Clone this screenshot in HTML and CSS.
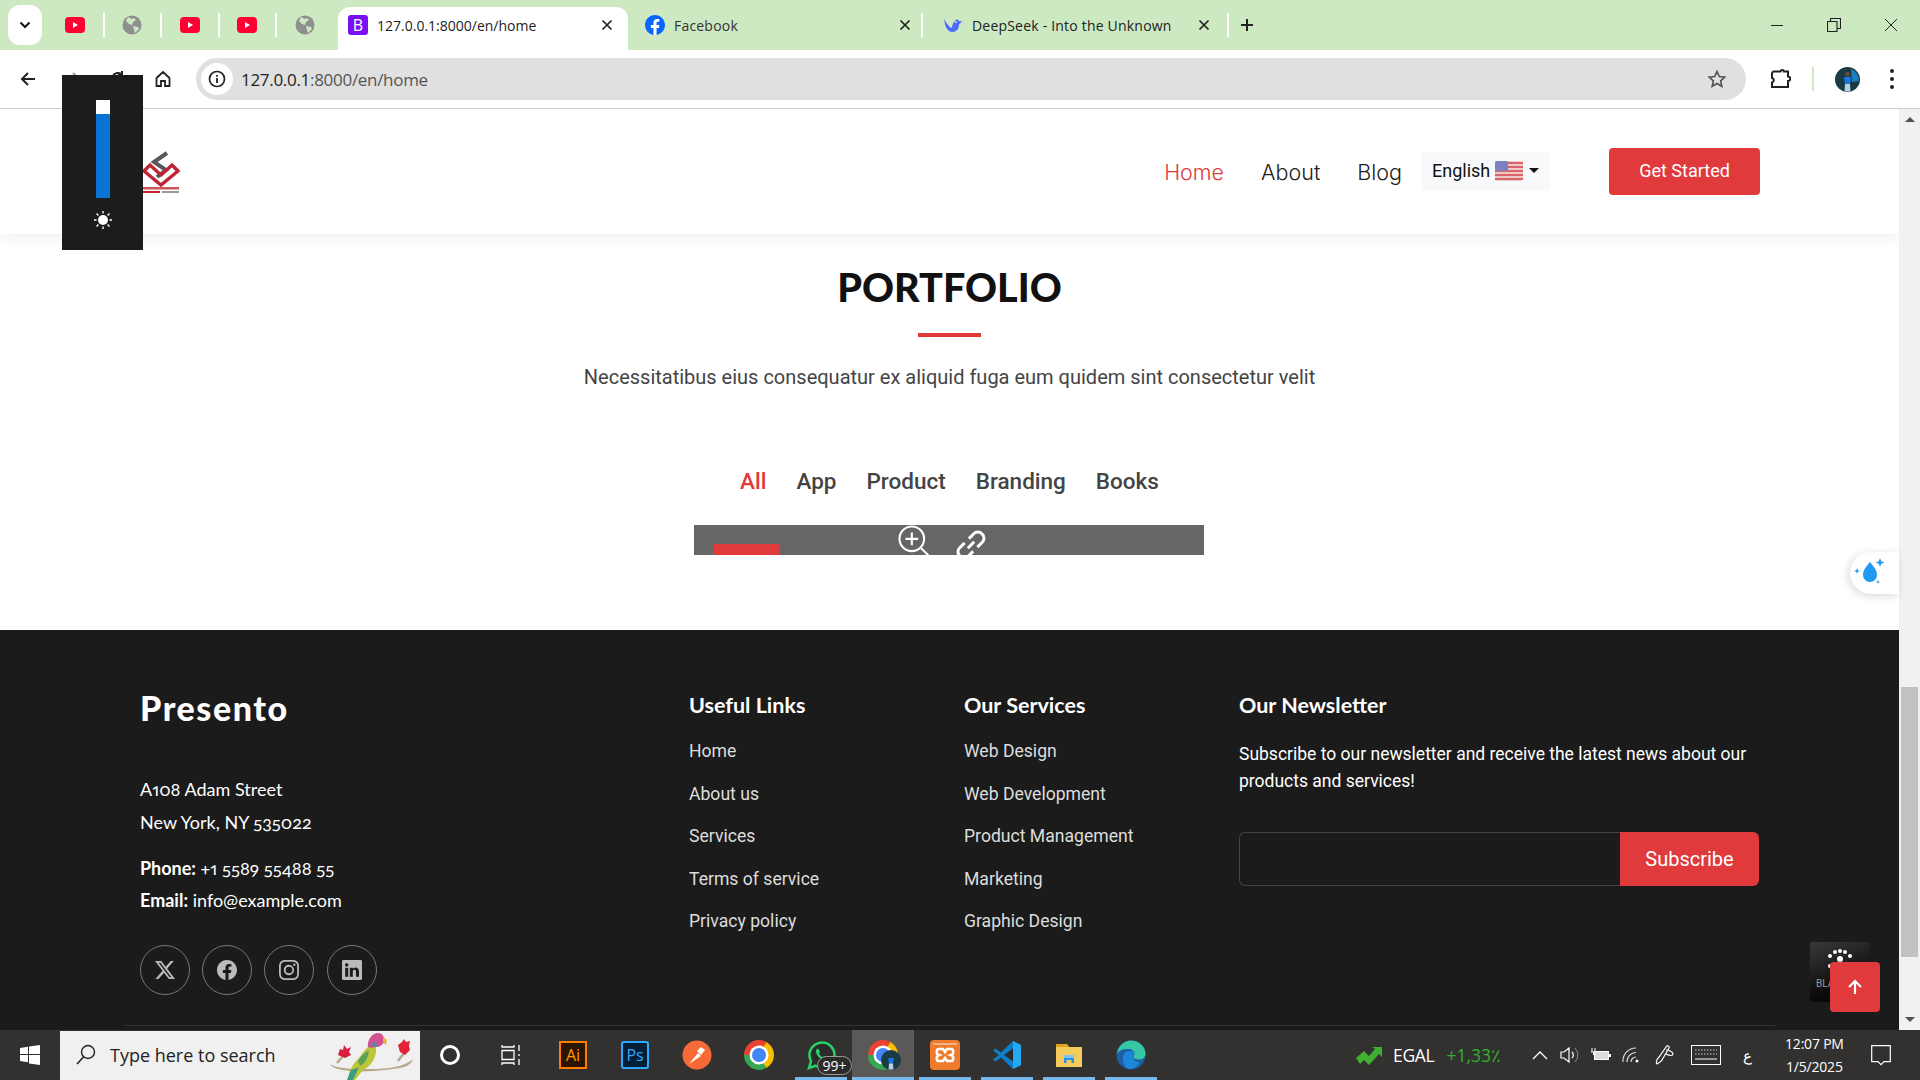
FILE: index.html
```html
<!DOCTYPE html>
<html lang="en">
<head>
<meta charset="utf-8">
<title>Presento</title>
<link rel="stylesheet" href="styles.css">
</head>
<body>
<svg class="defs" width="0" height="0" aria-hidden="true">
  <symbol id="yt" viewBox="0 0 20 16"><rect width="20" height="16" rx="4" fill="#ff0033"/><path d="M8 5l5 3-5 3z" fill="#fff"/></symbol>
  <symbol id="globe" viewBox="0 0 20 20"><circle cx="10" cy="10" r="9.500" fill="#8f8f8f"/><path d="M6 2l4 2 2-1 2 2-3 2-1 3-3-1-3-3zM11 11l5 1 1 2-4 4-1-3z" fill="#cde9c1"/></symbol>
  <symbol id="x" viewBox="0 0 12 12"><path d="M1.500 1.500l9 9M10.500 1.500l-9 9" fill="none" stroke="#222" stroke-width="1.700"/></symbol>
</svg>

<div class="tabstrip">
  <button class="tab-search"><svg width="12" height="8" viewBox="0 0 12 8"><path d="M1.500 1.500L6 6l4.500-4.500" fill="none" stroke="#111" stroke-width="2"/></svg></button>
  <div class="mini"><svg width="20" height="16"><use href="#yt"/></svg></div><i class="sep"></i>
  <div class="mini"><svg width="20" height="20"><use href="#globe"/></svg></div><i class="sep"></i>
  <div class="mini"><svg width="20" height="16"><use href="#yt"/></svg></div><i class="sep"></i>
  <div class="mini"><svg width="20" height="16"><use href="#yt"/></svg></div><i class="sep"></i>
  <div class="mini"><svg width="20" height="20"><use href="#globe"/></svg></div>
  <div class="tab active">
    <span class="bs-icon">B</span>
    <span class="tab-title">127.0.0.1:8000/en/home</span>
    <svg class="tab-close" width="12" height="12"><use href="#x"/></svg>
  </div>
  <div class="tab fb">
    <svg width="20" height="20" viewBox="0 0 16 16"><circle cx="8" cy="8" r="8" fill="#fff"/><path fill="#0866ff" d="M16 8.049c0-4.446-3.582-8.050-8-8.050C3.580 0-.002 3.603-.002 8.050c0 4.017 2.926 7.347 6.750 7.951v-5.625h-2.030V8.050H6.750V6.275c0-2.017 1.195-3.131 3.022-3.131.876 0 1.791.157 1.791.157v1.980h-1.009c-.993 0-1.303.621-1.303 1.258v1.510h2.218l-.354 2.326H9.250V16c3.824-.604 6.750-3.934 6.750-7.951"/></svg>
    <span class="tab-title">Facebook</span>
    <svg class="tab-close" width="12" height="12"><use href="#x"/></svg>
  </div>
  <i class="sep"></i>
  <div class="tab ds">
    <svg width="20" height="16" viewBox="0 0 20 16"><path fill="#4d6bfe" d="M1 2c1 4 1 9 5 12 3 2 7 1 9-2 1-2 1-4 1-5 1 0 2-1 3-3-1 0-2 1-3 0-1-2-3-2-4 0-2 2-3 4-3 7-3-1-5-4-8-9z"/><circle cx="13" cy="5" r="1" fill="#cde9c1"/></svg>
    <span class="tab-title">DeepSeek - Into the Unknown</span>
    <svg class="tab-close" width="12" height="12"><use href="#x"/></svg>
  </div>
  <i class="sep"></i>
  <svg class="plus" width="14" height="14" viewBox="0 0 14 14"><path d="M7 1v12M1 7h12" stroke="#222" stroke-width="2"/></svg>
  <div class="win-controls">
    <svg width="14" height="14" viewBox="0 0 14 14"><path d="M1 7.500h12" stroke="#222" stroke-width="1"/></svg>
    <svg width="14" height="14" viewBox="0 0 14 14"><path d="M.5 3.500h9.500v10H.5zM3.500 3.500V.5h10v10h-3.500" fill="none" stroke="#222" stroke-width="1.100"/></svg>
    <svg width="14" height="14" viewBox="0 0 14 14"><path d="M1 1l12 12M13 1L1 13" stroke="#222" stroke-width="1"/></svg>
  </div>
</div>

<div class="toolbar">
  <div class="tb-btn"><svg width="18" height="18" viewBox="0 0 18 18"><path d="M16 9H3M9 3L3 9l6 6" fill="none" stroke="#222" stroke-width="2"/></svg></div>
  <div class="tb-btn"><svg width="18" height="18" viewBox="0 0 18 18"><path d="M2 9h13M9 3l6 6-6 6" fill="none" stroke="#999" stroke-width="2"/></svg></div>
  <div class="tb-btn"><svg width="18" height="18" viewBox="0 0 18 18"><path d="M15 9a6 6 0 1 1-2-4.500M13 1v4h-4" fill="none" stroke="#222" stroke-width="2"/></svg></div>
  <div class="tb-btn"><svg width="18" height="18" viewBox="0 0 18 18"><path d="M2.500 8L9 2l6.500 6v8H11v-5H7v5H2.500z" fill="none" stroke="#222" stroke-width="1.800"/></svg></div>
  <div class="omni">
    <span class="info"><svg width="18" height="18" viewBox="0 0 18 18"><circle cx="9" cy="9" r="7.500" fill="none" stroke="#222" stroke-width="1.700"/><path d="M9 8v5M9 5v1.800" stroke="#222" stroke-width="1.800"/></svg></span>
    <span class="url"><b>127.0.0.1</b>:8000/en/home</span>
    <svg class="star" width="20" height="20" viewBox="0 0 20 20"><path d="M10 2.500l2.300 5 5.400.6-4 3.700 1.100 5.400-4.800-2.800-4.800 2.800 1.100-5.400-4-3.700 5.400-.6z" fill="none" stroke="#555" stroke-width="1.700"/></svg>
  </div>
  <div class="tb-btn ext"><svg width="22" height="22" viewBox="0 0 22 22"><path d="M8 3.500h3.500a1.800 1.800 0 0 1 3.500 0h4v5a1.800 1.800 0 0 1 0 4.500v6H3v-4.500a2.300 2.300 0 0 0 0-4.500V5.500a2 2 0 0 1 2-2z" fill="none" stroke="#222" stroke-width="2"/></svg></div>
  <i class="tb-sep"></i>
  <div class="avatar"><svg width="25" height="25" viewBox="0 0 25 25"><circle cx="12.500" cy="12.500" r="12.500" fill="#1a3a44"/><path d="M16 2a12 12 0 0 1 8 12l-7 1z" fill="#1c7fc0"/><path d="M9 10h7l-1 7h-5z" fill="#1976e8"/><circle cx="12.500" cy="7" r="2.200" fill="#6b4a3a"/><path d="M10 17h5l.5 7.500h-6z" fill="#b7d0e8"/></svg></div>
  <div class="dots"><i></i><i></i><i></i></div>
</div>

<div class="page">
  <div class="viewport">
    <header class="site-header">
      <div class="logo">
        <svg width="38" height="43" viewBox="0 0 38 43">
          <path d="M25 2L12 11l12 8-9 7" fill="none" stroke="#58585a" stroke-width="4"/>
          <path d="M2 20l6-6 11 10 11-10 6 6-17 14z" fill="none" stroke="#be2433" stroke-width="3.400"/>
          <rect x="1" y="36" width="36" height="2.500" fill="#c8565c"/>
          <rect x="1" y="40" width="17" height="2" fill="#c0262f"/>
          <rect x="20" y="40" width="17" height="2" fill="#999"/>
        </svg>
      </div>
      <nav class="main-nav">
        <a class="nav-link current">Home</a>
        <a class="nav-link">About</a>
        <a class="nav-link">Blog</a>
      </nav>
      <div class="lang">
        <span>English</span>
        <svg class="flag" width="28" height="20" viewBox="0 0 28 20">
          <rect width="28" height="20" rx="3" fill="#efc8c8"/>
          <path d="M0 2h28M0 6h28M0 10h28M0 14h28M0 18h28" stroke="#d9656b" stroke-width="2"/>
          <rect width="13" height="10" rx="2" fill="#7b82c4"/>
        </svg>
        <i class="caret"></i>
      </div>
      <a class="btn-start">Get Started</a>
    </header>

    <section class="portfolio">
      <h2 class="section-title">PORTFOLIO</h2>
      <div class="title-rule"></div>
      <p class="section-sub">Necessitatibus eius consequatur ex aliquid fuga eum quidem sint consectetur velit</p>
      <ul class="filters">
        <li class="current">All</li>
        <li>App</li>
        <li>Product</li>
        <li>Branding</li>
        <li>Books</li>
      </ul>
      <div class="item-overlay">
        <i class="item-tag"></i>
        <svg class="ov-zoom" width="34" height="34" viewBox="0 0 16 16"><circle cx="6.500" cy="6.500" r="5.800" fill="none" stroke="#fff" stroke-width="1"/><path d="M6.500 3.500v6M3.500 6.500h6M10.800 10.800l4.500 4.500" fill="none" stroke="#fff" stroke-width="1"/></svg>
        <svg class="ov-link" width="34" height="34" viewBox="0 0 16 16"><path d="M6.500 9.500l3-3M7 5l2.300-2.300a2.600 2.600 0 0 1 3.800 0l.2.200a2.600 2.600 0 0 1 0 3.800L11 9M9 11l-2.300 2.300a2.600 2.600 0 0 1-3.800 0l-.2-.2a2.600 2.600 0 0 1 0-3.800L5 7" fill="none" stroke="#fff" stroke-width="1.400"/></svg>
      </div>
    </section>

    <footer class="site-footer">
      <div class="footer-grid">
        <div class="col-about">
          <h3 class="brand">Presento</h3>
          <p class="addr">A108 Adam Street<br>New York, NY 535022</p>
          <p class="contact"><strong>Phone:</strong> +1 5589 55488 55<br><strong>Email:</strong> info@example.com</p>
          <div class="socials">
            <a class="social"><svg width="20" height="20" viewBox="0 0 16 16"><path fill="#bbb" d="M12.600.75h2.454l-5.360 6.142L16 15.250h-4.937l-3.867-5.070-4.425 5.070H.316l5.733-6.570L0 .75h5.063l3.495 4.633L12.601.750Zm-.86 13.028h1.360L4.323 2.145H2.865z"/></svg></a>
            <a class="social"><svg width="20" height="20" viewBox="0 0 16 16"><path fill="#bbb" d="M16 8.049c0-4.446-3.582-8.050-8-8.050C3.580 0-.002 3.603-.002 8.050c0 4.017 2.926 7.347 6.750 7.951v-5.625h-2.030V8.050H6.750V6.275c0-2.017 1.195-3.131 3.022-3.131.876 0 1.791.157 1.791.157v1.980h-1.009c-.993 0-1.303.621-1.303 1.258v1.510h2.218l-.354 2.326H9.250V16c3.824-.604 6.750-3.934 6.750-7.951"/></svg></a>
            <a class="social"><svg width="20" height="20" viewBox="0 0 16 16"><path fill="#bbb" d="M8 0C5.829 0 5.556.01 4.703.048 3.850.088 3.269.222 2.760.420a3.900 3.900 0 0 0-1.417.923A3.900 3.900 0 0 0 .42 2.760C.222 3.268.087 3.850.048 4.700.01 5.555 0 5.827 0 8.001c0 2.172.01 2.444.048 3.297.04.852.174 1.433.372 1.942.205.526.478.972.923 1.417.444.445.89.719 1.416.923.51.198 1.090.333 1.942.372C5.555 15.990 5.827 16 8 16s2.444-.01 3.298-.048c.851-.04 1.434-.174 1.943-.372a3.900 3.900 0 0 0 1.416-.923c.445-.445.718-.891.923-1.417.197-.509.332-1.090.372-1.942C15.990 10.445 16 10.173 16 8s-.01-2.445-.048-3.299c-.04-.851-.175-1.433-.372-1.941a3.900 3.900 0 0 0-.923-1.417A3.900 3.900 0 0 0 13.240.42c-.51-.198-1.092-.333-1.943-.372C10.443.01 10.172 0 7.998 0zm-.717 1.442h.718c2.136 0 2.389.007 3.232.046.78.035 1.204.166 1.486.275.373.145.64.319.92.599s.453.546.598.92c.11.281.24.705.275 1.485.039.843.047 1.096.047 3.231s-.008 2.389-.047 3.232c-.035.78-.166 1.203-.275 1.485a2.500 2.500 0 0 1-.599.919c-.28.28-.546.453-.92.598-.28.11-.704.24-1.485.276-.843.038-1.096.047-3.232.047s-2.390-.009-3.233-.047c-.78-.036-1.203-.166-1.485-.276a2.500 2.500 0 0 1-.92-.598 2.500 2.500 0 0 1-.6-.92c-.109-.281-.24-.705-.275-1.485-.038-.843-.046-1.096-.046-3.233s.008-2.388.046-3.231c.036-.78.166-1.204.276-1.486.145-.373.319-.64.599-.92s.546-.453.92-.598c.282-.11.705-.24 1.485-.276.738-.034 1.024-.044 2.515-.045zm4.988 1.328a.96.96 0 1 0 0 1.920.96.96 0 0 0 0-1.920m-4.270 1.122a4.109 4.109 0 1 0 0 8.217 4.109 4.109 0 0 0 0-8.217m0 1.441a2.667 2.667 0 1 1 0 5.334 2.667 2.667 0 0 1 0-5.334"/></svg></a>
            <a class="social"><svg width="20" height="20" viewBox="0 0 16 16"><path fill="#bbb" d="M0 1.146C0 .513.526 0 1.175 0h13.650C15.474 0 16 .513 16 1.146v13.708c0 .633-.526 1.146-1.175 1.146H1.175C.526 16 0 15.487 0 14.854zm4.943 12.248V6.169H2.542v7.225zm-1.200-8.212c.837 0 1.358-.554 1.358-1.248-.015-.709-.52-1.248-1.342-1.248S2.400 3.226 2.400 3.934c0 .694.521 1.248 1.327 1.248zm4.908 8.212V9.359c0-.216.016-.432.08-.586.173-.431.568-.878 1.232-.878.869 0 1.216.662 1.216 1.634v3.865h2.401V9.250c0-2.220-1.184-3.252-2.764-3.252-1.274 0-1.845.7-2.165 1.193v.025h-.016l.016-.025V6.169h-2.400c.03.678 0 7.225 0 7.225z"/></svg></a>
          </div>
        </div>
        <div class="col-links">
          <h4>Useful Links</h4>
          <ul><li>Home</li><li>About us</li><li>Services</li><li>Terms of service</li><li>Privacy policy</li></ul>
        </div>
        <div class="col-links">
          <h4>Our Services</h4>
          <ul><li>Web Design</li><li>Web Development</li><li>Product Management</li><li>Marketing</li><li>Graphic Design</li></ul>
        </div>
        <div class="col-news">
          <h4>Our Newsletter</h4>
          <p>Subscribe to our newsletter and receive the latest news about our products and services!</p>
          <form class="sub-form"><div class="sub-input"></div><div class="sub-btn">Subscribe</div></form>
        </div>
      </div>
      <div class="footer-rule"></div>
    </footer>
  </div>
  <div class="scrollbar">
    <i class="arrow up"></i>
    <div class="track"><div class="thumb"></div></div>
    <i class="arrow down"></i>
  </div>
</div>

<div class="taskbar">
  <div class="start"><svg width="22" height="22" viewBox="0 0 22 22"><path fill="#fff" d="M1 4l8-1.200V10H1zM10 2.600L21 1v9H10zM1 11h8v7.200L1 17zM10 11h11v10l-11-1.500z"/></svg></div>
  <div class="searchbox">
    <svg width="22" height="24" viewBox="0 0 22 24"><circle cx="13" cy="9" r="6.500" fill="none" stroke="#222" stroke-width="1.400"/><path d="M8.500 14L2 21" stroke="#222" stroke-width="1.600"/></svg>
    <span class="search-text">Type here to search</span>
    <svg class="bird" width="86" height="49" viewBox="0 0 86 49">
      <path d="M0 33c8 5 24 5 40 5 18 0 34-2 43-10-2 6-8 9-20 10-14 2-30 3-43 2-10-1-18-3-20-7z" fill="#b5aa8c"/>
      <path d="M7 32l7-8M68 30l6-8" stroke="#b5aa8c" stroke-width="2.500"/>
      <path d="M8 24l2-6 3 1 1-5 3 4 4-2-2 5 2 3-6 3z" fill="#d8203e"/>
      <path d="M68 14l4-3 2-3 2 3 4-1-1 5 1 4-5 5-5-3z" fill="#e2243a"/>
      <path d="M18 49c0-7 4-15 10-21 4-5 8-11 12-14 5-1 7 2 6 7-1 8-6 15-13 18l-8 10z" fill="#bcc636"/>
      <path d="M17 49l4-10 8-3-6 13z" fill="#3d9c80"/>
      <path d="M28 30c3-5 7-9 11-10-1 7-4 12-9 15z" fill="#58a257"/>
      <path d="M38 16c-1-7 4-14 10-14 5 0 7 5 6 9-2 4-5 5-8 5-3 1-6 1-8 0z" fill="#d1528f"/>
      <path d="M39 15c2-3 5-4 9-4l-1 5z" fill="#6f7fa8"/>
      <path d="M53 6l4 3-1 5-3-3z" fill="#e8b23a"/>
    </svg>
  </div>
  <div class="cortana"></div>
  <div class="task-item"><svg width="20" height="22" viewBox="0 0 20 22"><path d="M1 1v2h12V1M1 6.500h12v9H1zM1 21v-2h12v2M18 1v6M18 10v2M18 15v6" fill="none" stroke="#fff" stroke-width="1.300"/></svg></div>
  <div class="task-item"><span class="ai">Ai</span></div>
  <div class="task-item"><span class="ps">Ps</span></div>
  <div class="task-item"><svg width="30" height="30" viewBox="0 0 30 30"><circle cx="15" cy="15" r="14.500" fill="#f76935"/><path d="M7 24l9-11 3 3zM15 11l4-4 4 3-4 5z" fill="#fff"/></svg></div>
  <div class="task-item"><i class="chrome"></i></div>
  <div class="task-item on wa">
    <svg width="30" height="30" viewBox="0 0 30 30"><path d="M3 28l2-7a12.500 12.500 0 1 1 4.500 4.700z" fill="#2c2b29" stroke="#25d366" stroke-width="2.500"/><path d="M10.500 9.500c2-2 2.500 1 3.500 2.500l-1 1.500c1 2 2.500 3 4 4l1.500-1.500c1.500 1 4 2 2 3.500-4 3-13-6-10-10z" fill="#25d366"/></svg>
    <span class="badge">99+</span>
  </div>
  <div class="task-item on active">
    <i class="chrome"></i>
    <svg class="chrome-av" width="20" height="20" viewBox="0 0 25 25"><circle cx="12.500" cy="12.500" r="12.500" fill="#1a3a44"/><path d="M9 10h7l-1 7h-5z" fill="#1976e8"/><path d="M10 17h5l.5 7.500h-6z" fill="#b7d0e8"/></svg>
  </div>
  <div class="task-item on"><svg width="30" height="30" viewBox="0 0 30 30"><rect width="30" height="30" rx="4" fill="#ee7c2c"/><rect x="3" y="3" width="24" height="2" fill="#f6b283"/><path d="M9 9h4l2 3 2-3h4c3 0 3 5 0 6 3 1 3 6 0 6h-4l-2-3-2 3H9c-3 0-3-5 0-6-3-1-3-6 0-6z" fill="none" stroke="#fff" stroke-width="2.500"/></svg></div>
  <div class="task-item on"><svg width="30" height="30" viewBox="0 0 30 30"><path d="M21 1l8 4v20l-8 4-12-11.500-5.500 4L1 19.500 7 15 1 10.500 3.500 8.500 9 12.500z" fill="#0a7fcb"/><path d="M21 1l8 4v20l-8 4z" fill="#23a8f2"/><path d="M21 8.500L12 15l9 6.500z" fill="#2c2b29"/></svg></div>
  <div class="task-item on"><svg width="28" height="28" viewBox="0 0 28 28"><path d="M1 3h11l2 3h13v20H1z" fill="#f5cc5c"/><path d="M1 3h11l2 3H1z" fill="#dba21b"/><path d="M9 22v-6h10v6h-2.500v-3h-5v3z" fill="#2a93dd"/><rect x="9" y="14" width="10" height="3" fill="#7fc4f0"/></svg></div>
  <div class="task-item on"><svg width="30" height="30" viewBox="0 0 30 30"><circle cx="15" cy="15" r="14.500" fill="#1c5fa8"/><path d="M1 14C2 6 8 .5 15 .5c8 0 14.500 6 14.500 13 0 4-3 6-7 6-3 0-5-1-5-2.500 0-1 1-1.500 1-3 0-3-3-5-6-5C7 9 3 10 1 14z" fill="#37c6a6"/><path d="M7 18c0-4 3-7 7-7 3 0 4 2 4 3 0 1-1 2-1 3 0 3 3 5 7 5-2 4-6 7-10 7-4 0-7-4-7-11z" fill="#1e86d8"/></svg></div>
  <div class="tray">
    <svg class="stock" width="28" height="20" viewBox="0 0 28 20"><path d="M1 13l8-7 5 5 6-7-3-2h10v10l-3-3-10 11-5-5-4 4z" fill="#3fb02f"/></svg>
    <span class="egal">EGAL</span>
    <span class="pct">+1,33٪</span>
    <svg class="t-caret" width="16" height="10" viewBox="0 0 16 10"><path d="M1 9l7-7 7 7" fill="none" stroke="#fff" stroke-width="1.300"/></svg>
    <svg class="t-vol" width="20" height="20" viewBox="0 0 20 20"><path d="M1 7h3l5-4v14l-5-4H1zM12 7a4 4 0 0 1 0 6" fill="none" stroke="#fff" stroke-width="1.200"/><path d="M15 3a10 10 0 0 1 0 14" fill="none" stroke="#888" stroke-width="1"/></svg>
    <svg class="t-bat" width="20" height="16" viewBox="0 0 20 16"><path d="M1 1v4M4 1v4M0 5h5M2.500 5v3" stroke="#fff" stroke-width="1"/><rect x="3.500" y="4.500" width="14" height="8" fill="#ddd" stroke="#fff"/><rect x="18" y="7" width="2" height="3" fill="#fff"/></svg>
    <svg class="t-wifi" width="18" height="18" viewBox="0 0 18 18"><path d="M1 16A13 13 0 0 1 14 2M5 16a9 9 0 0 1 9-9.500M9 16a5 5 0 0 1 5-5" fill="none" stroke="#ddd" stroke-width="1.200"/><circle cx="15" cy="15" r="1.500" fill="#fff"/></svg>
    <svg class="t-pen" width="20" height="22" viewBox="0 0 20 22"><path d="M2 20c-2-3 0-5 2-7l7-10c1-2 4-1 3 1l-7 12c-1 2-3 3-5 4zM11 6c3 0 7 2 7 4s-3 2-7 0" fill="none" stroke="#fff" stroke-width="1.200"/></svg>
    <svg class="t-kbd" width="30" height="20" viewBox="0 0 30 20"><rect x=".5" y=".5" width="29" height="19" fill="none" stroke="#fff"/><path d="M4 5h22M4 9h22" stroke="#ccc" stroke-dasharray="1.500 1.500"/><path d="M4 14h22" stroke="#fff"/></svg>
    <span class="t-lang">ع</span>
    <div class="clock"><span>12:07 PM</span><span>1/5/2025</span></div>
    <svg class="t-note" width="20" height="21" viewBox="0 0 20 21"><path d="M.7.7h18.600v16H13l-3 3-3-3H.7z" fill="none" stroke="#fff" stroke-width="1.200"/></svg>
  </div>
</div>

<div class="osd">
  <div class="osd-bar"><div class="osd-fill"></div></div>
  <svg width="20" height="20" viewBox="0 0 20 20"><circle cx="10" cy="10" r="5" fill="#fff"/><path d="M10 1v2.500M10 16.500V19M1 10h2.500M16.500 10H19M3.600 3.600l1.800 1.800M14.600 14.600l1.800 1.800M3.600 16.400l1.800-1.800M14.600 5.400l1.800-1.800" stroke="#fff" stroke-width="1.400"/></svg>
</div>

<div class="drop-widget"><svg width="32" height="30" viewBox="0 0 32 30"><path d="M16 5c4 5 7 8 7 13a7 7 0 0 1-14 0c0-5 3-8 7-13z" fill="#1e9bf0"/><path d="M26 1l1.200 3.300 3.300 1.200-3.300 1.200L26 10l-1.200-3.300-3.300-1.200 3.300-1.200zM3 11l.8 2.200L6 14l-2.200.8L3 17l-.8-2.200L0 14l2.200-.8zM24 23l.6 1.400 1.400.6-1.400.6-.6 1.400-.6-1.400-1.400-.6 1.400-.6z" fill="#1e9bf0"/></svg></div>

<div class="black-tile"><span>BLA</span></div>
<div class="to-top"><svg width="18" height="18" viewBox="0 0 18 18"><path d="M9 16V3M3 9l6-6 6 6" fill="none" stroke="#fff" stroke-width="2.200"/></svg></div>
</body>
</html>
```

FILE: styles.css
```css
* { box-sizing: border-box; }
html, body { margin: 0; padding: 0; }
body {
  position: relative;
  width: 1920px;
  height: 1080px;
  overflow: hidden;
  display: flex;
  flex-direction: column;
  font-family: Roboto, "Liberation Sans", sans-serif;
  background: #fff;
}
.defs { position: absolute; }
svg { display: block; flex: none; }
i { font-style: normal; }
ul { list-style: none; margin: 0; padding: 0; }
h2, h3, h4, p { margin: 0; }

/* tab strip */
.tabstrip {
  height: 50px;
  flex: none;
  display: flex;
  align-items: center;
  padding-left: 8px;
  background: #cde9c1;
  font-family: "Open Sans", "Noto Sans", sans-serif;
  font-size: 14px;
  color: #222;
}
.tab-search {
  width: 34px;
  height: 40px;
  margin: 0 5px 0 0;
  padding: 0;
  border: 0;
  border-radius: 12px;
  background: #fff;
  display: flex;
  align-items: center;
  justify-content: center;
}
.mini { width: 55.500px; display: flex; justify-content: center; }
.sep { width: 2px; height: 24px; background: #fff; flex: none; }
.tab {
  height: 50px;
  display: flex;
  align-items: center;
  gap: 9px;
}
.tab-title { flex: 1; white-space: nowrap; }
.tab.active {
  width: 290px;
  height: 43px;
  margin: 7px 0 0 5.500px;
  padding: 0 15px 7px 10px;
  border-radius: 12px 12px 0 0;
  background: #fff;
}
.bs-icon {
  width: 20px;
  height: 20px;
  border-radius: 3px;
  background: #7a10f2;
  color: #fff;
  font: 16px/20px "Open Sans", sans-serif;
  text-align: center;
}
.tab.fb { width: 293px; padding: 0 10px 0 17px; }
.tab.fb .tab-title { color: #333; letter-spacing: .2px; }
.tab.ds { width: 304px; padding: 0 17px 0 20px; gap: 9px; }
.tab.ds .tab-title { letter-spacing: .2px; }
.plus { margin-left: 11px; }
.win-controls {
  margin-left: auto;
  width: 150px;
  padding-right: 22px;
  display: flex;
  justify-content: space-between;
  align-items: center;
}

/* toolbar */
.toolbar {
  height: 59px;
  flex: none;
  display: flex;
  align-items: center;
  padding: 0 0 0 5px;
  background: #fff;
  border-bottom: 1px solid #ccc;
}
.tb-btn { width: 45px; display: flex; justify-content: center; }
.omni {
  width: 1550px;
  height: 42px;
  margin-left: 11px;
  border-radius: 21px;
  background: #e0e0e0;
  display: flex;
  align-items: center;
  padding: 0 19px 0 5px;
}
.info {
  width: 32px;
  height: 32px;
  border-radius: 50%;
  background: #fff;
  display: flex;
  align-items: center;
  justify-content: center;
}
.url {
  margin-left: 8px;
  font-family: "Open Sans", "Noto Sans", sans-serif;
  font-size: 17px;
  letter-spacing: -.3px;
  color: #555;
}
.url b { font-weight: 400; color: #222; }
.star { margin-left: auto; }
.ext { margin-left: 11px; }
.tb-sep { width: 2px; height: 24px; background: #cde9c1; margin-left: 10px; }
.avatar { margin-left: 21px; }
.dots { margin-left: 30px; display: flex; flex-direction: column; gap: 4px; }
.dots i { width: 4px; height: 4px; border-radius: 50%; background: #222; }

/* page */
.page { flex: 1; display: flex; min-height: 0; }
.viewport { width: 1899px; display: flex; flex-direction: column; overflow: hidden; }
.scrollbar {
  width: 21px;
  display: flex;
  flex-direction: column;
  align-items: center;
  background: #f1f1f1;
}
.arrow { width: 0; height: 0; border-left: 5px solid transparent; border-right: 5px solid transparent; margin: 8px 0; flex: none; }
.arrow.up { border-bottom: 5px solid #505050; }
.arrow.down { border-top: 5px solid #505050; }
.track { flex: 1; width: 100%; padding: 557px 2px 0; }
.thumb { height: 270px; background: #c1c1c1; }

/* header */
.site-header {
  height: 125px;
  flex: none;
  position: relative;
  z-index: 1;
  display: flex;
  align-items: center;
  padding: 0 139px 0 142px;
  background: #fff;
  box-shadow: 0 2px 16px rgba(0, 0, 0, .08);
}
.logo { margin-top: 1px; }
.main-nav {
  margin-left: auto;
  display: flex;
  gap: 37px;
  font-family: Inter, "Noto Sans", sans-serif;
  font-size: 21.500px;
  font-weight: 300;
  color: #222;
}
.nav-link.current { color: #e03a3c; }
.lang {
  width: 129px;
  height: 39px;
  margin-left: 19px;
  border-radius: 4px;
  background: #f8f9fa;
  display: flex;
  align-items: center;
  padding: 0 0 2px 11px;
  font-size: 18px;
  color: #111;
}
.flag { margin-left: 5px; }
.caret {
  margin-left: 6px;
  border-top: 5px solid #111;
  border-left: 5px solid transparent;
  border-right: 5px solid transparent;
}
.btn-start {
  width: 151px;
  height: 47px;
  margin-left: 59px;
  border-radius: 4px;
  background: #e03a3c;
  color: #fff;
  font-size: 18px;
  line-height: 45px;
  text-align: center;
}

/* portfolio */
.portfolio {
  height: 396px;
  flex: none;
  display: flex;
  flex-direction: column;
  align-items: center;
  padding-top: 30px;
  background: #fff;
}
.section-title {
  font-family: Lato, "Liberation Sans", sans-serif;
  font-size: 39.500px;
  line-height: 46px;
  font-weight: 900;
  color: #111;
}
.title-rule { width: 63px; height: 4px; margin-top: 23px; background: #e03a3c; }
.section-sub { margin-top: 26px; font-size: 20px; line-height: 28px; color: #444; }
.filters {
  margin-top: 74.500px;
  display: flex;
  gap: 30px;
  font-size: 22.500px;
  line-height: 30px;
  font-weight: 500;
  color: #444;
}
.filters .current { color: #e03a3c; }
.item-overlay {
  position: relative;
  width: 510px;
  height: 30px;
  margin: 29px 2px 0 0;
  overflow: hidden;
  background: #666;
}
.item-tag { position: absolute; left: 19px; top: 19px; width: 67px; height: 11px; background: #e03a3c; }
.ov-zoom { position: absolute; left: 204px; top: 0; }
.ov-link { position: absolute; left: 260px; top: 3px; }

/* footer */
.site-footer {
  flex: 1;
  display: flex;
  flex-direction: column;
  padding: 0 124px 0 125px;
  background: #1b1b1b;
  color: #fff;
}
.footer-grid {
  height: 395px;
  flex: none;
  display: grid;
  grid-template-columns: 549px 275px 275px 1fr;
  padding: 58px 15px 0;
}
.footer-rule { height: 1px; background: #333; }
.brand {
  font-family: Lato, "Liberation Sans", sans-serif;
  font-size: 34px;
  line-height: 40px;
  font-weight: 900;
  letter-spacing: 1.550px;
}
.addr, .contact {
  font-family: Lato, "Liberation Sans", sans-serif;
  font-size: 18px;
  font-weight: 400;
  font-feature-settings: "onum", "pnum";
}
.addr { margin-top: 44.500px; line-height: 33px; }
.contact { margin-top: 13px; line-height: 32px; }
.contact strong { font-weight: 700; }
.socials { margin-top: 29px; display: flex; gap: 12.200px; }
.social {
  width: 50px;
  height: 50px;
  border: 1px solid #777;
  border-radius: 50%;
  display: flex;
  align-items: center;
  justify-content: center;
}
.col-links h4, .col-news h4 {
  margin-top: 5px;
  font-family: Lato, "Liberation Sans", sans-serif;
  font-size: 21.500px;
  line-height: 24px;
  font-weight: 700;
}
.col-links ul { margin-top: 13px; font-size: 17.600px; color: #ddd; }
.col-links li { height: 42.500px; line-height: 42.500px; }
.col-news p { margin-top: 24px; font-size: 17.500px; line-height: 27px; }
.sub-form { display: flex; height: 54px; margin-top: 37px; width: 520px; }
.sub-input { flex: 1; border: 1px solid #444; border-right: 0; border-radius: 6px 0 0 6px; }
.sub-btn {
  width: 139px;
  border-radius: 0 6px 6px 0;
  background: #e03a3c;
  font-size: 20px;
  line-height: 54px;
  text-align: center;
}

/* taskbar */
.taskbar {
  height: 50px;
  flex: none;
  display: flex;
  align-items: stretch;
  background: #32312f;
  color: #fff;
  font-family: "Open Sans", "Noto Sans", sans-serif;
}
.start { width: 60px; display: flex; align-items: center; justify-content: center; }
.searchbox {
  position: relative;
  width: 360px;
  margin-top: 1px;
  display: flex;
  align-items: center;
  padding: 0 0 2px 15px;
  background: #f0f0f0;
  color: #222;
  overflow: hidden;
}
.search-text { margin-left: 13px; font-size: 18px; }
.bird { position: absolute; left: 270px; top: 0; }
.cortana {
  width: 20px;
  height: 20px;
  margin: 15px 20px 0 20px;
  border: 3px solid #fff;
  border-radius: 50%;
}
.task-item {
  position: relative;
  width: 62px;
  flex: none;
  display: flex;
  align-items: center;
  justify-content: center;
}
.task-item.on::after {
  content: "";
  position: absolute;
  left: 5px;
  right: 5px;
  bottom: 0;
  height: 3px;
  background: #76b9ed;
}
.task-item.active { background: #5a5957; }
.task-item.active::after { left: 0; right: 0; }
.ai, .ps {
  width: 28px;
  height: 28px;
  text-align: center;
  font-size: 16px;
  line-height: 24px;
  border: 2px solid;
}
.ai { background: #2c1500; color: #ff9a00; border-color: #ff7c00; }
.ps { background: #001e36; color: #31a8ff; border-color: #31a8ff; border-radius: 3px; }
.chrome {
  position: relative;
  width: 30px;
  height: 30px;
  border-radius: 50%;
  background: conic-gradient(from 30deg, #fbbc04 0 120deg, #34a853 0 240deg, #ea4335 0);
}
.chrome::after {
  content: "";
  position: absolute;
  inset: 8px;
  border-radius: 50%;
  background: #4285f4;
  box-shadow: 0 0 0 2.500px #fff;
}
.chrome-av { position: absolute; left: 29px; top: 20px; }
.badge {
  position: absolute;
  left: 27px;
  top: 26px;
  width: 35px;
  height: 19px;
  border: 1px solid #999;
  border-radius: 10px;
  background: #2c2b29;
  font-size: 14px;
  line-height: 17px;
  text-align: center;
}
.tray { flex: 1; display: flex; align-items: center; padding-left: 0; }
.stock { margin-left: 193px; }
.egal { margin-left: 10px; font-size: 17.500px; letter-spacing: -.3px; }
.pct { margin-left: 12px; font-size: 17.500px; letter-spacing: -.3px; color: #2fb12f; }
.t-caret { margin-left: 31px; }
.t-vol { margin-left: 12px; }
.t-bat { margin-left: 11px; }
.t-wifi { margin-left: 11px; }
.t-pen { margin-left: 15px; }
.t-kbd { margin-left: 16px; }
.t-lang { margin-left: 22px; font-size: 15px; }
.clock {
  margin-left: 33px;
  display: flex;
  flex-direction: column;
  align-items: center;
  gap: 5px;
  font-size: 14px;
  line-height: 18px;
  letter-spacing: -.2px;
}
.t-note { margin-left: 27px; }

/* overlays */
.osd {
  position: absolute;
  z-index: 5;
  left: 62px;
  top: 75px;
  width: 81px;
  height: 175px;
  display: flex;
  flex-direction: column;
  align-items: center;
  padding-top: 25px;
  background: #1c1c1c;
}
.osd-bar { width: 14px; height: 98px; margin-bottom: 12px; padding-top: 14px; background: #fff; }
.osd-fill { height: 100%; background: #0a74d4; }
.drop-widget {
  position: absolute;
  z-index: 5;
  left: 1850px;
  top: 552px;
  width: 49px;
  height: 42px;
  padding: 5px 0 0 4px;
  border-radius: 21px 0 0 21px;
  background: #fff;
  box-shadow: -2px 2px 8px rgba(0, 0, 0, .15);
}
.black-tile {
  position: absolute;
  z-index: 5;
  left: 1810px;
  top: 942px;
  width: 60px;
  height: 60px;
  border-radius: 3px;
  padding: 36px 0 0 6px;
  background: linear-gradient(160deg, #3a3a3a, #0a0a0a 70%);
  color: #999;
  font-size: 10px;
}
.black-tile::before {
  content: "";
  position: absolute;
  left: 27px;
  top: 14px;
  width: 6px;
  height: 6px;
  border-radius: 50%;
  background: #fff;
  box-shadow: -10px -3px 0 -1px #fff, 0 -8px 0 -1px #fff, 10px -3px 0 -1px #fff, -10px 7px 0 -1px #fff, -5px -7px 0 -1px #fff, 5px -7px 0 -1px #fff;
}
.to-top {
  position: absolute;
  z-index: 6;
  left: 1830px;
  top: 962px;
  width: 50px;
  height: 50px;
  border-radius: 4px;
  background: #e03a3c;
  display: flex;
  align-items: center;
  justify-content: center;
}
```
